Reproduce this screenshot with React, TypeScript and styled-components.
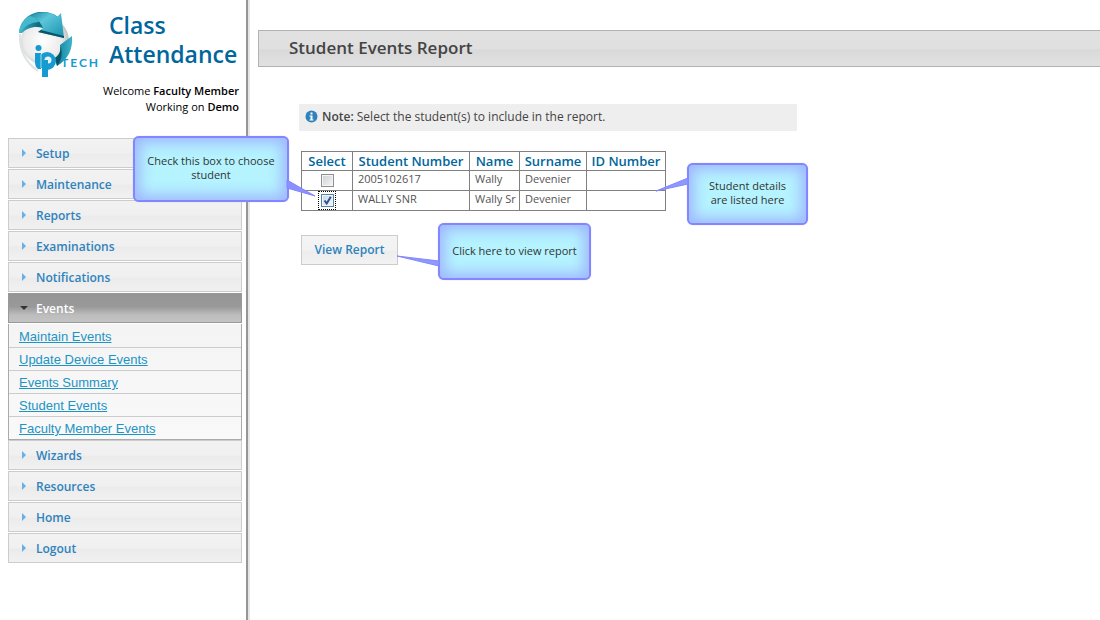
import React from "react";
import styled, { createGlobalStyle } from "styled-components";

const ui = '"Open Sans", "Noto Sans", sans-serif';

const GlobalStyle = createGlobalStyle`
  * { box-sizing: border-box; }
  body { margin: 0; background: #fff; font-family: ${ui}; }
  h1, h2, p, ul { margin: 0; padding: 0; }
`;

const Page = styled.div`
  display: flex;
  min-height: 100vh;
  overflow: hidden;
`;

const Sidebar = styled.aside`
  flex: none;
  width: 250px;
  padding: 10px 4px 0 8px;
  border-right: 2px solid #e6e6e6;
  box-shadow: inset -2px 0 0 #969696;
`;

const Brand = styled.div`
  display: flex;
  height: 72px;
  padding-left: 8px;
`;

const Logo = styled.svg`
  flex: none;
  width: 93px;
  height: 72px;
`;

const AppTitle = styled.h1`
  padding-top: 1px;
  color: #00669c;
  font-size: 23px;
  line-height: 29px;
  font-weight: 600;
  white-space: nowrap;
`;

const Welcome = styled.div`
  padding: 1px 5px 0 0;
  text-align: right;
  color: #000;
  font-size: 11px;
  line-height: 16px;
  height: 56px;

  b { font-weight: 600; }
`;

const Menu = styled.nav`
  display: flex;
  flex-direction: column;
  width: 234px;
`;

const MenuItem = styled.button<{ $open?: boolean }>`
  display: flex;
  align-items: center;
  gap: 8px;
  height: 30px;
  margin-bottom: 1px;
  padding: 1px 0 0 12px;
  border: 1px solid ${(p) => (p.$open ? "#999" : "#ccc")};
  background: ${(p) =>
    p.$open
      ? "linear-gradient(#959595 0%, #999 45%, #bdbdbd 75%, #c3c3c3 100%)"
      : "linear-gradient(#f2f2f2 0%, #f0f0f0 50%, #ebebeb 54%, #f1f1f1 100%)"};
  color: ${(p) => (p.$open ? "#fff" : "#2e83bd")};
  font: 600 12px/16px ${ui};
  text-align: left;
`;

const Arrow = styled.svg`
  width: 7px;
  height: 9px;
  overflow: visible;
`;

const SubMenu = styled.ul`
  list-style: none;
  padding-top: 1px;
  border: 1px solid #aaa;
  border-top: 0;
  background: linear-gradient(#f4f4f4, #f9f9f9);
`;

const SubItem = styled.li`
  display: flex;
  height: 23px;
  padding: 0 10px;
  border-bottom: 1px solid #ccc;
  &:last-child { height: 22px; border-bottom: 0; }
`;

const SubLink = styled.a`
  color: #1c94c4;
  font: 13px/24px "Liberation Sans", Arial, sans-serif;
`;

const Main = styled.main`
  flex: 1;
  min-width: 0;
  padding: 30px 0 0 8px;
`;

const TitleBar = styled.h2`
  height: 37px;
  padding-left: 30px;
  border: 1px solid #b2b2b2;
  border-right: 0;
  background: linear-gradient(#e1e1e1 0%, #e0e0e0 50%, #d9d9d9 54%, #e1e1e1 100%);
  color: #444;
  font-size: 17px;
  line-height: 34px;
  font-weight: 600;
`;

const Content = styled.div`
  display: flex;
  flex-direction: column;
  align-items: flex-start;
  padding: 37px 0 0 41px;
`;

const Note = styled.div`
  display: flex;
  align-items: center;
  gap: 4px;
  width: 100%;
  max-width: 498px;
  height: 27px;
  padding: 0 6px 2px;
  background: #eee;
  color: #444;
  font-size: 12px;
  line-height: 16px;

  b { font-weight: 600; }
`;

const Anchor = styled.div`
  position: relative;
  margin: 20px 0 0 2px;
`;

const ButtonAnchor = styled(Anchor)`
  margin-top: 24px;
`;

const Students = styled.table`
  width: 365px;
  table-layout: fixed;
  border-collapse: collapse;
`;

const HeadCell = styled.th`
  height: 19px;
  padding: 0;
  border: 1px solid #808080;
  color: #00669c;
  font-size: 13px;
  line-height: 18px;
  font-weight: 600;
  white-space: nowrap;
`;

const Cell = styled.td`
  height: 20px;
  padding: 0 5px;
  border: 1px solid #808080;
  color: #555;
  font-size: 11px;
  line-height: 16px;
  white-space: nowrap;
  vertical-align: top;
`;

const CheckCell = styled(Cell)`
  padding: 0;
`;

const CheckFrame = styled.label<{ $focused?: boolean }>`
  display: flex;
  align-items: center;
  justify-content: center;
  width: 18px;
  height: 19px;
  margin: 0 auto;
  outline: ${(p) => (p.$focused ? "1px dotted #000" : "none")};
  outline-offset: -1px;
`;

const Check = styled.input`
  appearance: none;
  width: 13px;
  height: 13px;
  margin: 0;
  border: 1px solid #8e8f8f;
  background: linear-gradient(135deg, #cbcfd5, #f6f6f6);
  box-shadow: inset 0 0 0 1px #f4f4f4;

  &:checked {
    border-color: #5586a3;
    background:
      url("data:image/svg+xml,%3Csvg xmlns='http://www.w3.org/2000/svg' viewBox='0 0 11 11'%3E%3Cpath d='M2.5 5.5 4.7 8.5 8.8 1.8' fill='none' stroke='%23334f93' stroke-width='2'/%3E%3C/svg%3E"),
      linear-gradient(135deg, #c4d8e8, #f2f8fc);
  }
`;

const ReportButton = styled.button`
  display: block;
  width: 97px;
  height: 30px;
  padding: 0;
  border: 1px solid #ccc;
  background: linear-gradient(#f4f4f4 0%, #f2f2f2 50%, #ededed 54%, #f2f2f2 100%);
  color: #2e83bd;
  font: 600 12px/16px ${ui};
`;

const Callout = styled.div<{ $x: number; $y: number; $w: number; $h: number }>`
  position: absolute;
  left: ${(p) => p.$x}px;
  top: ${(p) => p.$y}px;
  width: ${(p) => p.$w}px;
  height: ${(p) => p.$h}px;
  display: flex;
  align-items: center;
  justify-content: center;
  padding-bottom: 2px;
  border: 2px solid #8585ff;
  border-radius: 6px;
  background: #b5f3ff;
  box-shadow: inset 0 0 14px 5px #9fb8ff, 0 0 1px #a0a0ff;
  color: #333;
  font-size: 11px;
  line-height: 14px;
  text-align: center;
  white-space: nowrap;
`;

const Tail = styled.svg<{ $x: number; $y: number }>`
  position: absolute;
  left: ${(p) => p.$x}px;
  top: ${(p) => p.$y}px;
  overflow: visible;
`;

const items = ["Setup", "Maintenance", "Reports", "Examinations", "Notifications"];
const subItems = [
  "Maintain Events",
  "Update Device Events",
  "Events Summary",
  "Student Events",
  "Faculty Member Events",
];
const lowerItems = ["Wizards", "Resources", "Home", "Logout"];
const columns = [
  { label: "Select", width: 51 },
  { label: "Student Number", width: 117 },
  { label: "Name", width: 50 },
  { label: "Surname", width: 67 },
  { label: "ID Number", width: 79 },
];
const rows = [
  { number: "2005102617", name: "Wally", surname: "Devenier", checked: false },
  { number: "WALLY SNR", name: "Wally Sr", surname: "Devenier", checked: true },
];

function Entry({ label }: { label: string }) {
  return (
    <MenuItem type="button">
      <Arrow viewBox="0 0 7 9" aria-hidden="true">
        <path d="M1 0 L5 4 L1 8 Z" fill="#6aaee4" />
      </Arrow>
      {label}
    </MenuItem>
  );
}

function BrandLogo() {
  return (
    <Logo viewBox="16 10 93 72" role="img" aria-label="IP Tech">
      <defs>
        <radialGradient id="globe" cx="0.45" cy="0.5" r="0.56">
          <stop offset="0" stopColor="#fff" />
          <stop offset="0.7" stopColor="#ebebeb" />
          <stop offset="1" stopColor="#bcc0c2" />
        </radialGradient>
        <linearGradient id="head" x1="0" y1="0" x2="1" y2="1">
          <stop offset="0" stopColor="#1687a0" />
          <stop offset="0.35" stopColor="#5cc6da" />
          <stop offset="1" stopColor="#1690ac" />
        </linearGradient>
        <linearGradient id="sweep" x1="0" y1="0" x2="1" y2="0">
          <stop offset="0" stopColor="#3db3ca" />
          <stop offset="0.5" stopColor="#0d6a80" />
          <stop offset="1" stopColor="#2fa9c2" />
        </linearGradient>
        <linearGradient id="band" x1="0" y1="0" x2="1" y2="0">
          <stop offset="0" stopColor="#0e7f98" />
          <stop offset="1" stopColor="#3db3ca" />
        </linearGradient>
      </defs>
      <path d="M20 34 Q19 58 38 71" fill="none" stroke="#dfe1e2" strokeWidth="2" />
      <circle cx="45" cy="41" r="24" fill="url(#globe)" />
      <path d="M19 33 C20 20 30 12 42 12 C49 12 55 14 58 17 L50 31 C38 24 28 27 22 33 Z" fill="url(#sweep)" />
      <path d="M30 16 C40 10 52 12 57 17 L61 13 L64 38 L38 32 L43 28 C41 22 36 18 30 16 Z" fill="url(#head)" />
      <path d="M19 33 C20 24 25 18 30 16 Q36 17 39 22 Q27 22 20 33 Z" fill="#45b8ce" />
      <path d="M38 32 L64 38 L64 36 L41 30 Z" fill="#0a5668" />
      <path d="M60 45 L72 36 C73 48 69 59 57 66 L55 58 C60 54 61 50 60 45 Z" fill="url(#band)" />
      <path d="M60 45 C61 51 60 55 55 58 L57 66 C62 60 63 52 60 45 Z" fill="#0a5568" />
      <circle cx="47" cy="61" r="9" fill="#169bd1" />
      <circle cx="48" cy="60" r="3.500" fill="#e8f2f6" />
      <circle cx="38.500" cy="48" r="3" fill="#169bd1" />
      <path d="M35 53 h6 v16 h-3 q-3 -2 -3 -7 Z" fill="#169bd1" />
      <path d="M42 60 h6 v17 h-6 Z" fill="#169bd1" />
      <path d="M41 54 v14" stroke="#fff" strokeWidth="1" opacity="0.6" />
      <text x="61" y="67" fill="#169bd1" fontFamily="Lato, sans-serif" fontSize="12" fontWeight="700" letterSpacing="2">
        TECH
      </text>
    </Logo>
  );
}

export default function App() {
  return (
    <>
      <GlobalStyle />
      <Page>
        <Sidebar>
          <Brand>
            <BrandLogo />
            <AppTitle>
              Class
              <br />
              Attendance
            </AppTitle>
          </Brand>
          <Welcome>
            <p>Welcome <b>Faculty Member</b></p>
            <p>Working on <b>Demo</b></p>
          </Welcome>
          <Menu>
            {items.map((label) => <Entry key={label} label={label} />)}
            <MenuItem type="button" $open aria-expanded="true">
              <Arrow viewBox="0 0 7 9" aria-hidden="true">
                <path d="M-1 2 H7 L3 6 Z" fill="#333" />
              </Arrow>
              Events
            </MenuItem>
            <SubMenu>
              {subItems.map((label) => (
                <SubItem key={label}>
                  <SubLink href="#">{label}</SubLink>
                </SubItem>
              ))}
            </SubMenu>
            {lowerItems.map((label) => <Entry key={label} label={label} />)}
          </Menu>
        </Sidebar>
        <Main>
          <TitleBar>Student Events Report</TitleBar>
          <Content>
            <Note>
              <svg width="13" height="13" viewBox="0 0 13 13" aria-hidden="true">
                <circle cx="6.500" cy="6.500" r="6" fill="#2e83bd" />
                <path d="M5.500 2.500h2v2h-2z M4.500 5.500h3v4h1v1h-4v-1h1v-3h-1z" fill="#fff" />
              </svg>
              <span><b>Note:</b> Select the student(s) to include in the report.</span>
            </Note>
            <Anchor>
              <Students>
                <colgroup>
                  {columns.map((c) => <col key={c.label} style={{ width: c.width }} />)}
                </colgroup>
                <thead>
                  <tr>{columns.map((c) => <HeadCell key={c.label}>{c.label}</HeadCell>)}</tr>
                </thead>
                <tbody>
                  {rows.map((r) => (
                    <tr key={r.number}>
                      <CheckCell>
                        <CheckFrame $focused={r.checked}>
                          <Check type="checkbox" defaultChecked={r.checked} aria-label={`Select ${r.name}`} />
                        </CheckFrame>
                      </CheckCell>
                      <Cell>{r.number}</Cell>
                      <Cell>{r.name}</Cell>
                      <Cell>{r.surname}</Cell>
                      <Cell />
                    </tr>
                  ))}
                </tbody>
              </Students>
              <Callout $x={-168} $y={-15} $w={156} $h={66}>
                Check this box to choose
                <br />
                student
              </Callout>
              <Tail $x={-14} $y={28} width="30" height="18" aria-hidden="true">
                <path d="M0 1 L28 17 L0 9 Z" fill="#8a90ff" stroke="#8585ff" />
              </Tail>
              <Callout $x={386} $y={12} $w={121} $h={62}>
                Student details
                <br />
                are listed here
              </Callout>
              <Tail $x={355} $y={25} width="32" height="18" aria-hidden="true">
                <path d="M32 2 L0 15 L32 8 Z" fill="#8a9aff" stroke="#8585ff" />
              </Tail>
            </Anchor>
            <ButtonAnchor>
              <ReportButton type="button">View Report</ReportButton>
              <Callout $x={137} $y={-12} $w={153} $h={57}>
                Click here to view report
              </Callout>
              <Tail $x={96} $y={21} width="42" height="12" aria-hidden="true">
                <path d="M42 5 L0 0 L42 10 Z" fill="#8a9aff" stroke="#8585ff" />
              </Tail>
            </ButtonAnchor>
          </Content>
        </Main>
      </Page>
    </>
  );
}
